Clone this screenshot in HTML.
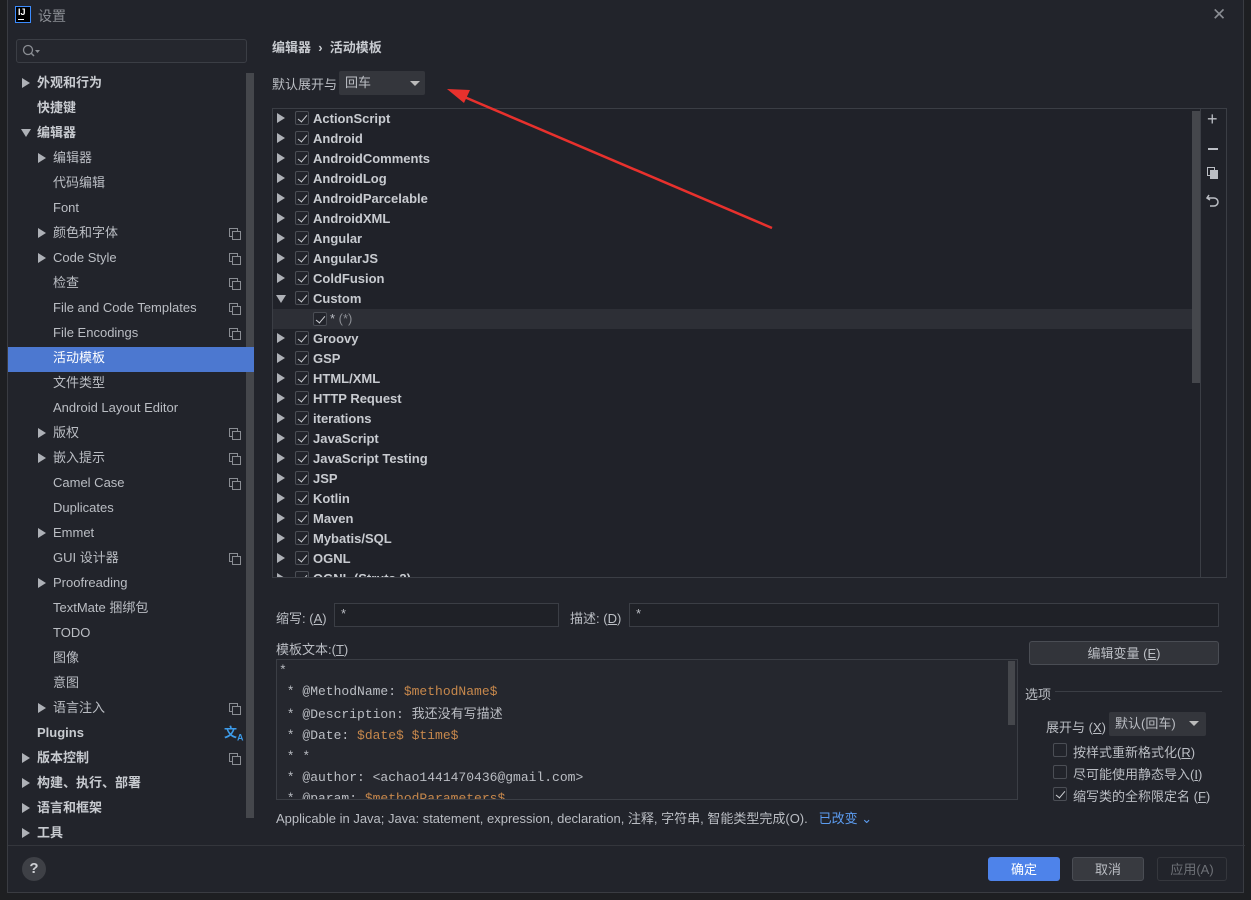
<!DOCTYPE html>
<html><head><meta charset="utf-8"><style>
*{margin:0;padding:0;box-sizing:border-box}
body{width:1251px;height:900px;background:#1e1f22;position:relative;overflow:hidden;font-family:"Liberation Sans","Noto Sans CJK SC",sans-serif;font-size:13px;color:#bbbec4}
.a{position:absolute;white-space:nowrap}
#dlg{position:absolute;left:7px;top:-1px;width:1237px;height:894px;background:#22242b;border:1px solid #3a3c42}
.row{position:absolute;height:25px;line-height:24px}
.tri{position:absolute;width:0;height:0;border-left:8px solid #aeb1b7;border-top:5px solid transparent;border-bottom:5px solid transparent}
.trid{position:absolute;width:0;height:0;border-top:8px solid #aeb1b7;border-left:5px solid transparent;border-right:5px solid transparent}
.cp{position:absolute;width:9px;height:9px;border:1px solid #8a8d93}
.cp:after{content:"";position:absolute;left:2px;top:2px;width:7px;height:7px;border:1px solid #8a8d93;background:#22242b}
.cb{position:absolute;width:14px;height:14px;border:1px solid #4b4e55;border-radius:2px;background:#22242b}
.ck:after{content:"";position:absolute;left:4px;top:1px;width:4px;height:8px;border-right:1.5px solid #cfd1d5;border-bottom:1.5px solid #cfd1d5;transform:rotate(40deg)}
.tr{position:absolute;left:0;height:20px;line-height:19px;font-weight:bold;color:#c8cbd0}
.mono{font-family:"Liberation Mono",monospace;font-size:13px}
.o{color:#c7884c}
.btn{position:absolute;height:24px;line-height:23px;text-align:center;border:1px solid #4a4d54;border-radius:3px;background:#32343a;color:#bbbec4}
.inp{position:absolute;height:24px;border:1px solid #3b3e45;background:#1f2127;color:#bbbec4;padding-left:6px;line-height:20px}
</style></head><body>
<div id="dlg">
<div class="a" style="left:7px;top:6px;width:16px;height:17px;border:1px solid #3c8cff;background:#000;color:#fff;font-size:9px;font-weight:bold;line-height:11px;padding-left:2px">IJ<div style="position:absolute;left:2px;top:12px;width:6px;height:1px;background:#fff"></div></div>
<div class="a" style="left:30px;top:6px;color:#8a8d93;font-size:14px">设置</div>
<div class="a" style="left:1204px;top:5px;color:#8a8d93;font-size:17px">✕</div>
<div class="a" style="left:8px;top:39px;width:231px;height:24px;border:1px solid #3b3e45;border-radius:3px;background:#25272e"></div>
<svg class="a" style="left:14px;top:44px" width="22" height="14"><circle cx="6" cy="6" r="4.5" fill="none" stroke="#8a8d93" stroke-width="1.3"/><line x1="9" y1="9" x2="12" y2="12" stroke="#8a8d93" stroke-width="1.5"/><path d="M13 6h5l-2.5 3z" fill="#8a8d93"/></svg>
<div class="a" style="left:238px;top:73px;width:8px;height:745px;background:#45474c"></div>
<div class="a" style="left:0;top:347px;width:246px;height:25px;background:#4c78d0"></div>
<div id="lt"></div>
<div class="a" style="left:264px;top:37px;font-weight:bold;color:#c8cbd0">编辑器 &nbsp;› &nbsp;活动模板</div>
<div class="a" style="left:264px;top:74px">默认展开与</div>
<div class="a" style="left:331px;top:71px;width:86px;height:24px;background:#34363c;border-radius:2px;padding-left:6px;line-height:23px">回车</div>
<div class="a" style="left:402px;top:81px;border-top:5px solid #bbb;border-left:5px solid transparent;border-right:5px solid transparent"></div>
<div class="a" style="left:264px;top:108px;width:955px;height:470px;border:1px solid #3b3e45;background:#202229;overflow:hidden">
 <div class="a" style="left:0;top:200px;width:927px;height:20px;background:#2d2f36"></div>
 <div class="a" style="left:919px;top:2px;width:8px;height:272px;background:#45474c"></div>
 <div class="a" style="left:927px;top:0;width:1px;height:470px;background:#3b3e45"></div>
 <div id="tt"></div>
 <div class="a" style="left:934px;top:0;color:#bbbec4;font-size:18px">+</div>
 <div class="a" style="left:935px;top:39px;width:10px;height:2px;background:#bbbec4"></div>
 <div class="a" style="left:934px;top:58px;width:8px;height:9px;border:1.5px solid #bbbec4"></div>
 <div class="a" style="left:937px;top:61px;width:8px;height:9px;border:1.5px solid #bbbec4;background:#bbbec4"></div>
 <svg class="a" style="left:933px;top:84px" width="14" height="14"><path d="M3 2L1 5l3 2M1 5h7a4 4 0 0 1 0 8H4" fill="none" stroke="#bbbec4" stroke-width="1.5"/></svg>
</div>
<div class="a" style="left:268px;top:608px">缩写: (<u>A</u>)</div>
<div class="inp" style="left:326px;top:603px;width:225px">*</div>
<div class="a" style="left:562px;top:608px">描述: (<u>D</u>)</div>
<div class="inp" style="left:621px;top:603px;width:590px">*</div>
<div class="a" style="left:268px;top:639px">模板文本:(<u>T</u>)</div>
<div class="a mono" style="left:268px;top:659px;width:742px;height:141px;border:1px solid #3b3e45;background:#25272e;line-height:21px;padding:0 0 0 2px;overflow:hidden;color:#bbbec4">
*<br>&nbsp;* @MethodName: <span class="o">$methodName$</span><br>&nbsp;* @Description: <span style="font-family:'Noto Sans CJK SC'">我还没有写描述</span><br>&nbsp;* @Date: <span class="o">$date$ $time$</span><br>&nbsp;* *<br>&nbsp;* @author: &lt;achao1441470436@gmail.com&gt;<br>&nbsp;* @param: <span class="o">$methodParameters$</span>
<div class="a" style="left:731px;top:1px;width:7px;height:64px;background:#45474c"></div>
</div>
<div class="btn" style="left:1021px;top:641px;width:190px">编辑变量 (<u>E</u>)</div>
<div class="a" style="left:1017px;top:684px">选项</div>
<div class="a" style="left:1047px;top:691px;width:167px;height:1px;background:#3b3e45"></div>
<div class="a" style="left:1038px;top:717px">展开与 (<u>X</u>)</div>
<div class="a" style="left:1101px;top:712px;width:97px;height:24px;background:#34363c;border-radius:2px;padding-left:6px;line-height:23px">默认(回车)</div>
<div class="a" style="left:1181px;top:721px;border-top:5px solid #bbb;border-left:5px solid transparent;border-right:5px solid transparent"></div>
<div class="cb" style="left:1045px;top:743px"></div><div class="a" style="left:1065px;top:742px">按样式重新格式化(<u>R</u>)</div>
<div class="cb" style="left:1045px;top:765px"></div><div class="a" style="left:1065px;top:764px">尽可能使用静态导入(<u>I</u>)</div>
<div class="cb ck" style="left:1045px;top:787px"></div><div class="a" style="left:1065px;top:786px">缩写类的全称限定名 (<u>F</u>)</div>
<div class="a" style="left:268px;top:808px">Applicable in Java; Java: statement, expression, declaration, 注释, 字符串, 智能类型完成(O). &nbsp;&nbsp;<span style="color:#5c9cf0">已改变 ⌄</span></div>
<div class="a" style="left:0;top:845px;width:1237px;height:1px;background:#34363c"></div>
<div class="a" style="left:14px;top:857px;width:24px;height:24px;border-radius:12px;background:#3e4046;color:#cfd1d5;text-align:center;line-height:24px;font-weight:bold;font-size:15px">?</div>
<div class="btn" style="left:980px;top:857px;width:72px;background:#4e83ea;border-color:#4e83ea;color:#fff">确定</div>
<div class="btn" style="left:1064px;top:857px;width:72px;background:#383a40">取消</div>
<div class="btn" style="left:1149px;top:857px;width:70px;background:#22242b;border-color:#35373d;color:#6e7177">应用(A)</div>
</div>
<svg class="a" style="left:0;top:0" width="1251" height="900"><line x1="772" y1="228" x2="462" y2="96" stroke="#e8312d" stroke-width="2.5"/><path d="M447 89l23 1-6 13z" fill="#e8312d"/></svg>
<script>
var L=[[1,'外观和行为',1,1],[0,'快捷键',1,1],[2,'编辑器',1,1],[1,'编辑器',2],[0,'代码编辑',2],[0,'Font',2],[1,'颜色和字体',2,0,1],[1,'Code Style',2,0,1],[0,'检查',2,0,1],[0,'File and Code Templates',2,0,1],[0,'File Encodings',2,0,1],[0,'活动模板',2],[0,'文件类型',2],[0,'Android Layout Editor',2],[1,'版权',2,0,1],[1,'嵌入提示',2,0,1],[0,'Camel Case',2,0,1],[0,'Duplicates',2],[1,'Emmet',2],[0,'GUI 设计器',2,0,1],[1,'Proofreading',2],[0,'TextMate 捆绑包',2],[0,'TODO',2],[0,'图像',2],[0,'意图',2],[1,'语言注入',2,0,1],[0,'Plugins',1,1,2],[1,'版本控制',1,1,1],[1,'构建、执行、部署',1,1],[1,'语言和框架',1,1],[1,'工具',1,1]];
var h='';L.forEach(function(r,i){var y=71+i*25,x=r[2]==1?29:45;
if(r[0]==1)h+='<div class="tri" style="left:'+(x-15)+'px;top:'+(y+7)+'px"></div>';
if(r[0]==2)h+='<div class="trid" style="left:'+(x-16)+'px;top:'+(y+8)+'px"></div>';
h+='<div class="row" style="left:'+x+'px;top:'+y+'px;'+(r[3]?'font-weight:bold;color:#c8cbd0':'')+(i==11?';color:#fff':'')+'">'+r[1]+'</div>';
if(r[4]==1)h+='<div class="cp" style="left:221px;top:'+(y+7)+'px"></div>';
if(r[4]==2)h+='<div class="row" style="left:216px;top:'+y+'px;color:#3d9be9;font-weight:bold">文<sub style="font-size:9px">A</sub></div>';
});document.getElementById('lt').innerHTML=h;
var T=['ActionScript','Android','AndroidComments','AndroidLog','AndroidParcelable','AndroidXML','Angular','AngularJS','ColdFusion','Custom','*','Groovy','GSP','HTML/XML','HTTP Request','iterations','JavaScript','JavaScript Testing','JSP','Kotlin','Maven','Mybatis/SQL','OGNL','OGNL (Struts 2)'];
h='';T.forEach(function(t,i){var y=i*20;
if(t=='*'){h+='<div class="cb ck" style="left:40px;top:'+(y+3)+'px"></div><div class="tr" style="left:57px;top:'+y+'px;font-weight:normal;color:#bbbec4">* <span style="color:#8a8d93">(*)</span></div>';return;}
if(t=='Custom')h+='<div class="trid" style="left:3px;top:'+(y+6)+'px"></div>';else h+='<div class="tri" style="left:4px;top:'+(y+4)+'px"></div>';
h+='<div class="cb ck" style="left:22px;top:'+(y+2)+'px"></div><div class="tr" style="left:40px;top:'+y+'px">'+t+'</div>';});
document.getElementById('tt').innerHTML=h;
</script>
</body></html>
